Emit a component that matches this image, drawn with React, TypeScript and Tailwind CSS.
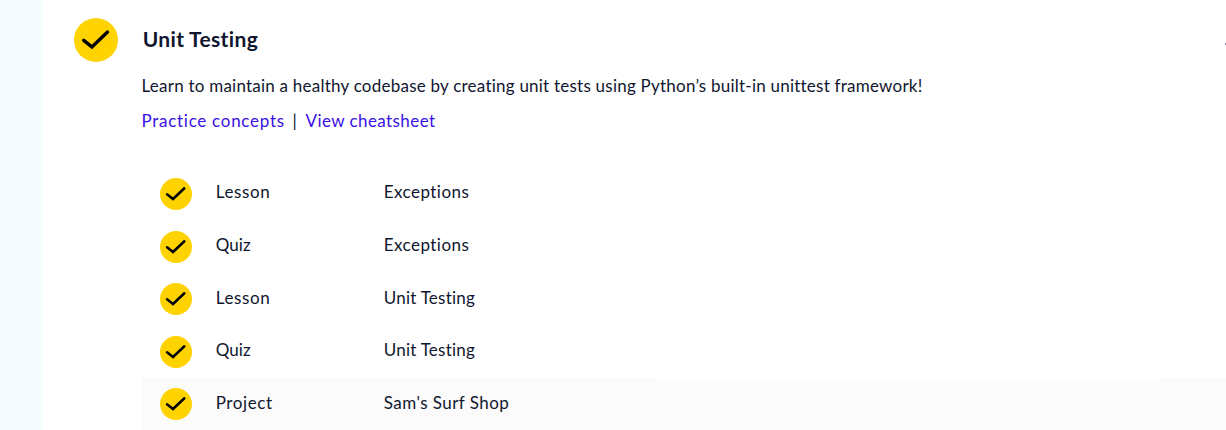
const rows = [
  { type: "Lesson", title: "Exceptions", typeCls: "tracking-[0.6px]", titleCls: "tracking-[0.47px]" },
  { type: "Quiz", title: "Exceptions", typeCls: "tracking-[0.1px]", titleCls: "tracking-[0.47px]" },
  { type: "Lesson", title: "Unit Testing", typeCls: "tracking-[0.6px]", titleCls: "tracking-[0.24px]" },
  { type: "Quiz", title: "Unit Testing", typeCls: "tracking-[0.1px]", titleCls: "tracking-[0.24px]" },
  { type: "Project", title: "Sam's Surf Shop", typeCls: "tracking-[0.6px]", titleCls: "tracking-[0.45px]", active: true },
];

function Check({ className }: { className: string }) {
  return (
    <svg viewBox="0 0 44 44" className={className} aria-hidden="true">
      <circle cx="22" cy="22" r="22" fill="#ffd300" />
      <path d="M9.7 22.4 L17.9 28.9 L33.5 14.1" fill="none" stroke="#000" strokeWidth="3.4" strokeLinecap="round" />
    </svg>
  );
}

export default function App() {
  return (
    <div className="flex h-[430px] w-full overflow-hidden bg-white font-['Lato',sans-serif] text-[17px] leading-6 text-[#10162f] [font-variant-ligatures:none]">
      <div className="w-[42px] shrink-0 bg-[#f5fcff]" />
      <main className="min-w-0 flex-1 pl-8 pt-[18px]">
        <header className="flex h-11 items-center">
          <Check className="size-11 shrink-0" />
          <h2 className="ml-[24.7px] pb-0.5 text-[21px] font-bold leading-8 tracking-[0.34px]">Unit Testing</h2>
          <span className="ml-auto mt-2 h-0.5 w-px bg-[#8b8e98]" />
        </header>
        <div className="ml-[67.5px]">
          <p className="mt-3 whitespace-nowrap tracking-[0.23px]">
            Learn to maintain a healthy codebase by creating unit tests using Python’s built-in unittest framework!
          </p>
          <div className="mt-[11px] flex whitespace-nowrap">
            <a className="w-[151px] tracking-[0.72px] text-[#3a10e5]">Practice concepts</a>
            <span className="w-[13px]">|</span>
            <a className="tracking-[0.42px] text-[#3a10e5]">View cheatsheet</a>
          </div>
          <ul className="ml-[0.5px] mt-[35px]">
            {rows.map((row, i) => (
              <li
                key={i}
                className={
                  row.active
                    ? "flex h-[52.6px] rounded-l bg-[linear-gradient(to_right,#fbfbfb_510px,#fcfcfc_510px,#fcfcfc_1021px,#fbfbfb_1021px)] pl-[18px] pt-[10px]"
                    : "flex h-[52.6px] pl-[18px] pt-[10px]"
                }
              >
                <Check className="size-8 shrink-0" />
                <span className={"ml-[23.7px] mt-[2.4px] w-[168px] " + row.typeCls}>{row.type}</span>
                <span className={"mt-[2.4px] " + row.titleCls}>{row.title}</span>
              </li>
            ))}
          </ul>
        </div>
      </main>
    </div>
  );
}
